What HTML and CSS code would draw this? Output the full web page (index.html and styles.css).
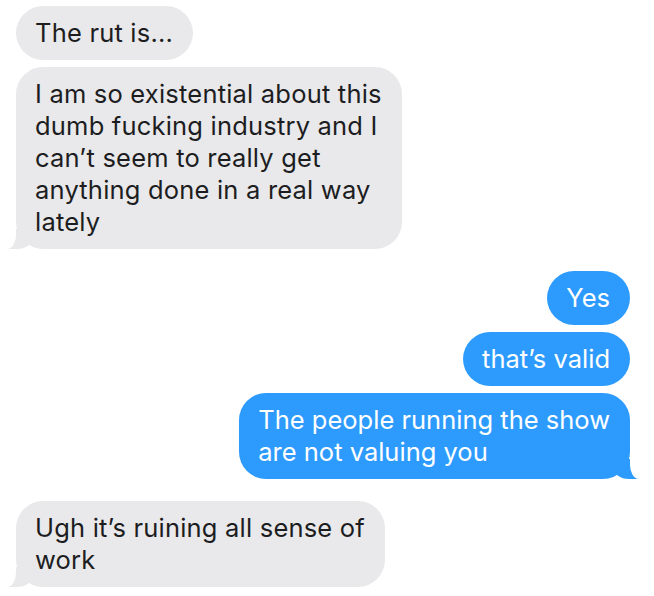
FILE: index.html
```html
<!DOCTYPE html>
<html lang="en">
<head>
    <meta charset="UTF-8">
    <meta name="viewport" content="width=device-width, initial-scale=1.0">
    <title>Messages</title>
    <link rel="stylesheet" href="styles.css">
</head>
<body>

    <div class="chat">
        <div class="msg them">The rut is...</div>
        <div class="msg them tail">I am so existential about this<br>dumb fucking industry and I<br>can’t seem to really get<br>anything done in a real way<br>lately</div>

        <div class="msg me group-start">Yes</div>
        <div class="msg me">that’s valid</div>
        <div class="msg me tail">The people running the show<br>are not valuing you</div>

        <div class="msg them tail group-start">Ugh it’s ruining all sense of<br>work</div>
    </div>

</body>
</html>
```

FILE: styles.css
```css
body {
    margin: 0;
    padding: 0;
    background: #fff;
    font-family: Inter, "Noto Sans", "Liberation Sans", sans-serif;
}

.chat {
    display: flex;
    flex-direction: column;
    gap: 7px;
    padding: 6px 24px 0 16px;
}

.msg {
    position: relative;
    width: fit-content;
    font-size: 25.5px;
    line-height: 32px;
    padding: 11px 20px 11px 19px;
    border-radius: 27px;
}

/* серые - собеседник */
.msg.them {
    background: #e9e9eb;
    color: #1d1d1f;
    align-self: flex-start;
    letter-spacing: 0.2px;
}

/* синие - мои */
.msg.me {
    background: #2d9bfd;
    color: #fff;
    align-self: flex-end;
}

.group-start {
    margin-top: 15px;
}

/* хвостики */
.msg.tail::before,
.msg.tail::after {
    content: "";
    position: absolute;
    bottom: 0;
    height: 20px;
}

.msg.them.tail::before {
    left: -9px;
    width: 26px;
    background: #e9e9eb;
    border-bottom-right-radius: 16px 12px;
}

.msg.them.tail::after {
    left: -14px;
    width: 14px;
    background: #fff;
    border-bottom-right-radius: 9px 14px;
}

.msg.me.tail::before {
    right: -9px;
    width: 26px;
    background: #2d9bfd;
    border-bottom-left-radius: 16px 12px;
}

.msg.me.tail::after {
    right: -14px;
    width: 14px;
    background: #fff;
    border-bottom-left-radius: 9px 14px;
}
```
